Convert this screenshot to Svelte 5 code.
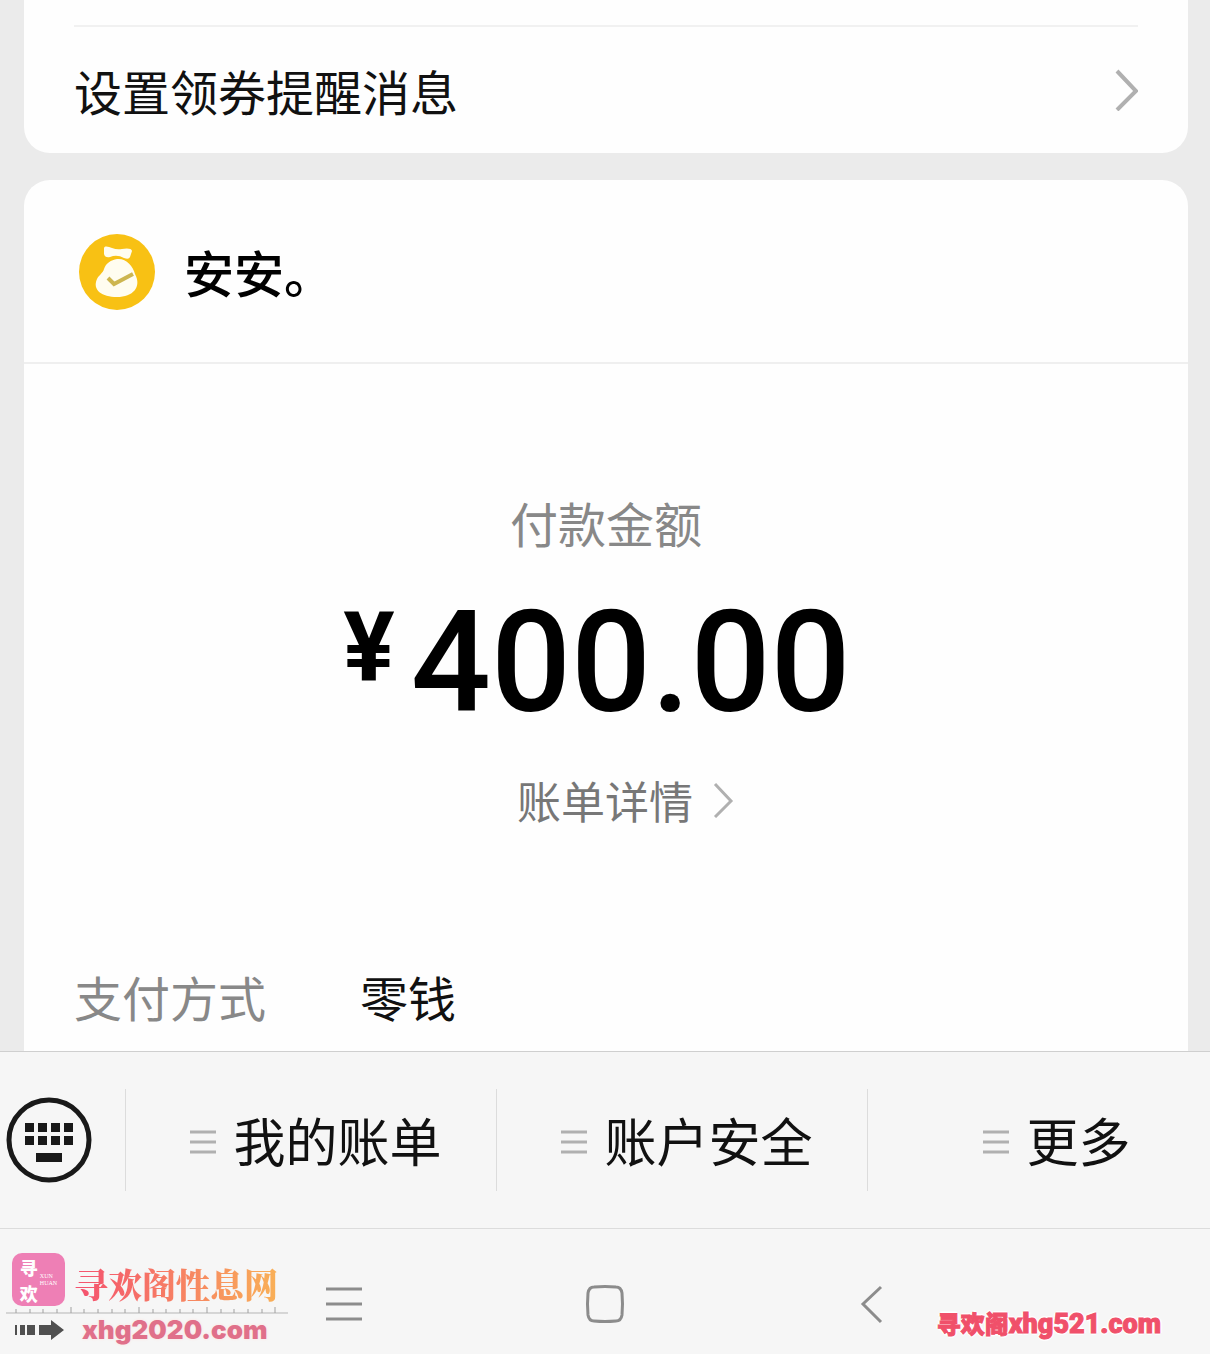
<script>
  const payment = {
    payee: '安安。',
    label: '付款金额',
    currency: '¥',
    amount: '400.00',
    methodLabel: '支付方式',
    method: '零钱'
  };

  const menus = ['我的账单', '账户安全', '更多'];

  // keyboard key positions
  const keyColumns = [26, 39, 52, 65];
  const keyRows = [33, 46];

  // ruler ticks, every fifth one is taller
  const ticks = Array.from({ length: 20 }, (_, i) => ({
    x: 10 + Math.round(i * 13.65),
    tall: i % 5 === 4
  }));
</script>

<div class="page">
  <main>
    <section class="card settings">
      <a class="setting-row" href="#reminder">
        <span>设置领券提醒消息</span>
        <svg width="24" height="42" viewBox="0 0 24 42" aria-hidden="true">
          <path d="M3 2 L22 22 L3 41" fill="none" stroke="#b0b0b0" stroke-width="4" />
        </svg>
      </a>
    </section>

    <section class="card payment">
      <header>
        <svg width="78" height="78" viewBox="0 0 78 78" aria-hidden="true">
          <circle cx="39" cy="40" r="38" fill="#f8c114" />
          <path
            d="M26 16 C27 13 31 15 34 16 Q39 18 44 17 C48 16 54 16 54 19 L52 25 Q51 28 46 26 Q39 22 32 25 Q27 26 26 22 Z"
            fill="#fffdf0"
          />
          <path
            d="M39 27 C48 26 55 34 57 42 C64 55 55 65 39 65 C24 65 14 58 19 47 C21 43 25 41 26 37 C28 31 33 28 39 27 Z"
            fill="#fffdf0"
          />
          <path d="M30 46 L36 52 L55 42" fill="none" stroke="#cdb650" stroke-width="4" />
        </svg>
        <h2>{payment.payee}</h2>
      </header>

      <div class="summary">
        <p class="label">{payment.label}</p>
        <p class="amount"><span class="currency">{payment.currency}</span>{payment.amount}</p>
        <a class="detail" href="#detail">
          <span>账单详情</span>
          <svg width="22" height="36" viewBox="0 0 22 36" aria-hidden="true">
            <path d="M2 2 L18 19 L2 35" fill="none" stroke="#b0b0b0" stroke-width="3" />
          </svg>
        </a>
      </div>

      <dl>
        <dt>{payment.methodLabel}</dt>
        <dd>{payment.method}</dd>
      </dl>
    </section>
  </main>

  <div class="menu-bar">
    <button class="keyboard" aria-label="键盘">
      <svg width="86" height="86" viewBox="0 0 86 86">
        <circle cx="43" cy="43" r="40" fill="none" stroke="#191919" stroke-width="5" />
        {#each keyRows as y}
          {#each keyColumns as x}
            <rect x={x - 7} y={y - 7} width="9" height="9" fill="#191919" />
          {/each}
        {/each}
        <rect x="30" y="56" width="26" height="9" fill="#191919" />
      </svg>
    </button>
    {#each menus as menu}
      <button class="menu">
        <svg width="26" height="28" viewBox="0 0 26 28" aria-hidden="true">
          <path d="M0 6 H26 M0 16 H26 M0 26 H26" stroke="#b0b0b0" stroke-width="3" />
        </svg>
        {menu}
      </button>
    {/each}
  </div>

  <nav>
    <button aria-label="最近任务">
      <svg width="44" height="44" viewBox="0 0 44 44">
        <path d="M7 7 H43 M7 22 H43 M7 37 H43" stroke="#8c8c8c" stroke-width="3" />
      </svg>
    </button>
    <button aria-label="主屏幕">
      <svg width="44" height="44" viewBox="0 0 44 44">
        <path
          d="M11 5 Q22 4 33 5 Q38 5 39 11 Q40 22 39 33 Q38 39 33 39 Q22 40 11 39 Q6 39 5 33 Q4 22 5 11 Q6 5 11 5 Z"
          fill="none"
          stroke="#8c8c8c"
          stroke-width="3"
        />
      </svg>
    </button>
    <button aria-label="返回">
      <svg width="44" height="44" viewBox="0 0 44 44">
        <path d="M34 5 L16 22 L34 40" fill="none" stroke="#8c8c8c" stroke-width="3" />
      </svg>
    </button>
  </nav>

  <div class="mark-left">
    <div class="mark-title">
      <span class="badge">
        <span class="badge-name"><span>寻</span><span>欢</span></span>
        <span class="badge-latin">XUN<br />HUAN</span>
      </span>
      <span class="site-name">寻欢阁性息网</span>
    </div>
    <svg width="282" height="8" viewBox="0 0 282 8" aria-hidden="true">
      <path d="M0 7 H282" stroke="#b5b5b5" stroke-width="1" />
      {#each ticks as tick}
        <path d="M{tick.x} {tick.tall ? 1 : 3} V7" stroke="#a0a0a0" stroke-width="1" />
      {/each}
    </svg>
    <div class="mark-address">
      <svg width="50" height="22" viewBox="0 0 50 22" aria-hidden="true">
        <path
          d="M0 6 H2 V16 H0 Z M5 6 H10 V16 H5 Z M12 6 H20 V16 H12 Z M24 6 H36 V1 L49 11 L36 21 V16 H24 Z"
          fill="#505050"
        />
      </svg>
      <span>xhg2020.com</span>
    </div>
  </div>

  <div class="mark-right"><span>寻欢阁</span>xhg521.com</div>
</div>

<style>
  :global(body) {
    margin: 0;
    background: #ebebeb;
  }

  .page {
    position: relative;
    display: flex;
    flex-direction: column;
    min-height: 100vh;
    font-family: 'Noto Sans CJK SC', 'Noto Sans', sans-serif;
    font-size: 48px;
    line-height: 60px;
    color: #111;
    background: #ebebeb;
  }

  main {
    flex: 1;
    display: flex;
    flex-direction: column;
    gap: 27px;
    padding: 0 22px 0 24px;
  }

  .card {
    background: #fefefe;
    border-radius: 26px;
  }

  .settings {
    padding: 25px 50px 0;
    border-radius: 0 0 26px 26px;
  }

  .setting-row {
    display: flex;
    align-items: center;
    justify-content: space-between;
    height: 126px;
    border-top: 2px solid #f1f1f1;
    color: inherit;
    text-decoration: none;
  }

  .payment {
    flex: 1;
    border-radius: 26px 26px 0 0;
  }

  header {
    display: flex;
    align-items: center;
    gap: 28px;
    height: 182px;
    padding: 0 54px;
    border-bottom: 2px solid #efefef;
  }

  h2 {
    margin: 0;
    font-size: 50px;
    font-weight: 500;
    color: #000;
  }

  .summary {
    display: flex;
    flex-direction: column;
    align-items: center;
    padding: 128px 0 136px;
  }

  .label {
    margin: 0 0 40px;
    color: #888;
  }

  .amount {
    display: flex;
    align-items: flex-start;
    gap: 16px;
    margin: 0 0 36px;
    padding-right: 18px;
    font-family: Roboto, 'Liberation Sans', sans-serif;
    font-size: 141px;
    font-weight: 500;
    line-height: 142px;
    color: #000;
  }

  .currency {
    font-size: 96px;
    font-weight: 700;
    line-height: 110px;
  }

  .detail {
    display: flex;
    align-items: center;
    gap: 20px;
    padding-left: 40px;
    font-size: 44px;
    color: #777;
    text-decoration: none;
  }

  dl {
    display: flex;
    gap: 94px;
    margin: 0;
    padding: 0 50px 24px;
  }

  dt {
    color: #888;
  }

  dd {
    margin: 0;
  }

  button {
    padding: 0;
    border: 0;
    background: none;
    font: inherit;
    color: inherit;
    cursor: pointer;
  }

  svg {
    display: block;
    flex: none;
  }

  .menu-bar {
    display: grid;
    grid-template-columns: 125px 371fr 371fr 343fr;
    align-items: center;
    height: 176px;
    border-top: 1px solid #cfcfcf;
    background: #f6f6f6;
  }

  .keyboard {
    padding-left: 6px;
  }

  .menu {
    display: flex;
    align-items: center;
    justify-content: center;
    gap: 17px;
    height: 102px;
    padding-left: 10px;
    border-left: 1px solid #dcdcdc;
    font-size: 52px;
  }

  .menu:last-child {
    padding-left: 36px;
  }

  nav {
    display: flex;
    justify-content: center;
    gap: 220px;
    height: 72px;
    padding-top: 53px;
    border-top: 1px solid #dcdcdc;
    background: #f6f6f6;
  }

  nav button {
    height: 44px;
  }

  /* site marks over the navigation bar */
  .mark-left {
    position: absolute;
    left: 6px;
    bottom: 8px;
  }

  .mark-title {
    display: flex;
    align-items: flex-end;
    gap: 9px;
    padding-left: 6px;
  }

  .badge {
    display: flex;
    align-items: center;
    justify-content: center;
    gap: 2px;
    width: 53px;
    height: 53px;
    border-radius: 10px;
    background: #ee7fb5;
    color: #fff;
  }

  .badge-name {
    display: flex;
    flex-direction: column;
    font-size: 18px;
    font-weight: 900;
    line-height: 26px;
  }

  .badge-latin {
    font-family: 'Liberation Serif', serif;
    font-size: 6px;
    line-height: 7px;
  }

  .site-name {
    background: linear-gradient(90deg, #f4506f, #f9b057);
    background-clip: text;
    color: transparent;
    font-family: 'Noto Serif CJK SC', 'Noto Sans CJK SC', serif;
    font-size: 34px;
    font-weight: 900;
    line-height: 44px;
  }

  .mark-address {
    display: flex;
    align-items: center;
    gap: 17px;
    padding-left: 9px;
    font-family: Inter, 'Open Sans', sans-serif;
    font-size: 26px;
    font-weight: 900;
    line-height: 32px;
    color: #e0708a;
    text-shadow: 0 0 3px #fde0dc;
  }

  .mark-right {
    position: absolute;
    right: 49px;
    bottom: 14px;
    font-family: Roboto, 'Open Sans', sans-serif;
    font-size: 27px;
    font-weight: 900;
    line-height: 32px;
    color: #f0506a;
    -webkit-text-stroke: 1px #f0506a;
    text-shadow: 2px 0 1px #fff, -2px 0 1px #fff, 0 2px 1px #fff, 0 -2px 1px #fff;
  }

  .mark-right span {
    font-family: 'Noto Sans CJK SC', sans-serif;
    font-size: 24px;
  }
</style>
